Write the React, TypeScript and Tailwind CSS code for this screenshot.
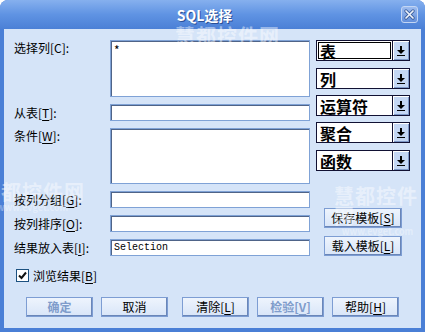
import React from "react";

const Arrow = () => (
  <svg width="8" height="10" viewBox="0 0 8 10" className="text-black">
    <rect x="3" y="0" width="2" height="4" fill="currentColor" />
    <path d="M0 4h8l-4 4z" fill="currentColor" />
    <rect x="0" y="9" width="8" height="1" fill="currentColor" />
  </svg>
);

function Combo({ text, focus }: { text: string; focus?: boolean }) {
  return (
    <div className="h-[21px] w-[94px] flex border border-[#111133] bg-white">
      <div className="flex-1 p-[1px]">
        <div
          className={
            "h-full flex items-center pl-[1px] text-[16px] font-bold leading-none text-black " +
            (focus ? "border border-black" : "border border-transparent")
          }
        >
          {text}
        </div>
      </div>
      <div className="w-[17px] h-full flex items-center justify-center bg-[#c4d7f4] border-l border-[#111133] shadow-[inset_1px_1px_0_#ffffff,inset_-1px_-1px_0_#7d98c7]">
        <Arrow />
      </div>
    </div>
  );
}

function Btn({
  children,
  disabled,
  className = "",
}: {
  children: React.ReactNode;
  disabled?: boolean;
  className?: string;
}) {
  return (
    <div
      className={
        "h-[20px] flex items-center justify-center border border-[#7d9dd3] bg-gradient-to-b from-[#eef4fd] to-[#d8e5f8] shadow-[inset_-1px_-1px_0_#6a86b8] text-[12px] leading-none " +
        (disabled ? "text-[#7f9ccb] font-bold " : "text-black ") +
        className
      }
    >
      {children}
    </div>
  );
}

const inputCls =
  "bg-white border border-[#7fa2d6] shadow-[inset_1px_1px_0_#4f6488]";

function Label({ children }: { children: React.ReactNode }) {
  return <div className="w-[96px] text-[12px] text-black leading-[16px] whitespace-nowrap">{children}</div>;
}

const U = ({ c }: { c: string }) => <span className="underline underline-offset-[2px]">{c}</span>;

export default function App() {
  return (
    <div className="w-[425px] h-[332px] overflow-hidden rounded-t-[8px] bg-[#4a7fd6] flex flex-col font-['Noto_Sans_CJK_SC','Liberation_Sans',sans-serif] relative">
      {/* title bar */}
      <div className="h-[29px] flex items-center bg-gradient-to-b from-[#86b0ee] via-[#5f93e3] to-[#4b80d6]">
        <div className="flex-1 flex justify-center pl-[8px]">
          <span className="text-white font-bold text-[14px] leading-none [text-shadow:1px_1px_0_#2a4f96]">
            SQL选择
          </span>
        </div>
        <div className="w-[17px] h-[17px] mr-[7px] rounded-[3px] border border-[#c3d6f4] bg-gradient-to-b from-[#9dbcef] to-[#628fdb] flex items-center justify-center">
          <svg width="11" height="11" viewBox="0 0 11 11">
            <path d="M2 2L9 9M9 2L2 9" stroke="#3d5f9c" strokeWidth="3.2" strokeLinecap="round" />
            <path d="M2 2L9 9M9 2L2 9" stroke="#eef3fb" strokeWidth="1.7" strokeLinecap="round" />
          </svg>
        </div>
      </div>

      {/* client area */}
      <div className="mx-[4px] mb-[4px] flex-1 bg-[#d5e4f8] pl-[10px] pt-[11px] relative">
        <div className="flex">
          {/* left block */}
          <div className="w-[296px] flex flex-col">
            <div className="flex">
              <Label>选择列[C]:</Label>
              <div className={"w-[200px] h-[57px] pl-[3px] pt-[2px] text-[12px] leading-[14px] " + inputCls}>*</div>
            </div>
            <div className="flex items-center mt-[7px]">
              <Label>
                从表[<U c="T" />]:
              </Label>
              <div className={"w-[200px] h-[17px] " + inputCls}></div>
            </div>
            <div className="flex mt-[7px]">
              <Label>
                条件[<U c="W" />]:
              </Label>
              <div className={"w-[200px] h-[56px] " + inputCls}></div>
            </div>
            <div className="flex items-center mt-[7px]">
              <Label>
                按列分组[<U c="G" />]:
              </Label>
              <div className={"w-[200px] h-[17px] " + inputCls}></div>
            </div>
            <div className="flex items-center mt-[7px]">
              <Label>
                按列排序[<U c="O" />]:
              </Label>
              <div className={"w-[200px] h-[17px] " + inputCls}></div>
            </div>
            <div className="flex items-center mt-[7px]">
              <Label>
                结果放入表[<U c="I" />]:
              </Label>
              <div className={"w-[200px] h-[17px] flex items-center pl-[3px] text-[10px] font-['Liberation_Mono',monospace] leading-none " + inputCls}>
                Selection
              </div>
            </div>
          </div>

          {/* right column */}
          <div className="ml-[6px] w-[94px] flex flex-col">
            <Combo text="表" focus />
            <div className="mt-[7px]"><Combo text="列" /></div>
            <div className="mt-[6px]"><Combo text="运算符" /></div>
            <div className="mt-[6px]"><Combo text="聚合" /></div>
            <div className="mt-[7px]"><Combo text="函数" /></div>
            <Btn className="mt-[37px] ml-[8px] w-[78px]">
              保存模板[<U c="S" />]
            </Btn>
            <Btn className="mt-[8px] ml-[8px] w-[78px]">
              载入模板[<U c="L" />]
            </Btn>
          </div>
        </div>

        {/* checkbox */}
        <div className="flex items-center mt-[13px] h-[13px] ml-[2px]">
          <div className="w-[13px] h-[13px] bg-white border border-[#1c5180] flex items-center justify-center">
            <svg width="9" height="9" viewBox="0 0 9 9">
              <path d="M1 4.5L3.5 7L8 1.5" stroke="#111" strokeWidth="2" fill="none" />
            </svg>
          </div>
          <span className="ml-[4px] text-[12px] leading-none text-black">
            浏览结果[<U c="B" />]
          </span>
        </div>

        {/* bottom buttons */}
        <div className="flex mt-[15px] ml-[12px]">
          <Btn disabled className="w-[67px]">确定</Btn>
          <Btn className="w-[67px] ml-[8px]">取消</Btn>
          <Btn className="w-[67px] ml-[14px]">
            清除[<U c="L" />]
          </Btn>
          <Btn disabled className="w-[67px] ml-[8px]">
            检验[<U c="V" />]
          </Btn>
          <Btn className="w-[67px] ml-[8px]">
            帮助[<U c="H" />]
          </Btn>
        </div>

        {/* watermarks (faint, over content) */}
        <div className="absolute left-[171px] top-[-3px] flex flex-col items-center pointer-events-none">
          <span className="text-[20px] font-bold leading-none text-white/45 tracking-[1px]">慧都控件网</span>
          <span className="text-[9px] font-bold leading-none text-white/45 mt-[1px]">www.evget.com</span>
        </div>
        <div className="absolute left-[-24px] top-[153px] flex flex-col items-center pointer-events-none">
          <span className="text-[20px] font-bold leading-none text-white/45 tracking-[1px]">慧都控件网</span>
          <span className="text-[9px] font-bold leading-none text-white/35 mt-[1px]">www.evget.com</span>
        </div>
        <div className="absolute left-[330px] top-[157px] flex flex-col items-center pointer-events-none">
          <span className="text-[20px] font-bold leading-none text-white/45 tracking-[1px]">慧都控件网</span>
          <span className="text-[9px] font-bold leading-none text-white/35 mt-[1px]">www.evget.com</span>
        </div>
      </div>
    </div>
  );
}
